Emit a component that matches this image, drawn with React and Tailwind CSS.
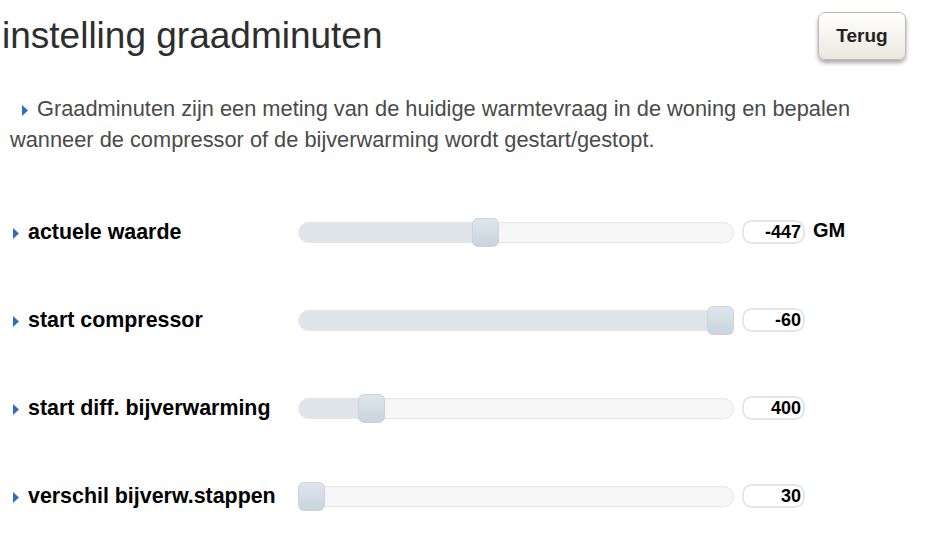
const rows = [
  { label: "actuele waarde", value: "-447", unit: "GM", pos: 174 },
  { label: "start compressor", value: "-60", pos: 409 },
  { label: "start diff. bijverwarming", value: "400", pos: 60 },
  { label: "verschil bijverw.stappen", value: "30", pos: 0 },
];

const Arrow = ({ className }) => (
  <svg width="6" height="11" viewBox="0 0 6 11" className={className}>
    <path d="M0 0 L6 5.5 L0 11 Z" fill="#2c6fc0" />
  </svg>
);

const Slider = ({ pos }) => {
  return (
    <div className="relative w-[436px] h-[21px] rounded-[11px] border border-[#e8e5dd] bg-[#f6f6f6]">
      <div
        className="absolute left-0 top-0 bottom-0 rounded-l-[11px] bg-[#dfe3ea]"
        style={{ width: pos + 13 }}
      />
      <div
        className="absolute top-[-5px] w-[27px] h-[29px] rounded-[6px] border border-[#ccd3da] bg-gradient-to-b from-[#dfe5ec] to-[#c9d4dd]"
        style={{ left: pos - 1 }}
      />
    </div>
  );
};

const Row = ({ label, value, unit, pos }) => {
  return (
    <div className="flex flex-row items-center h-[88px]">
      <div className="flex flex-row items-center w-[298px] pl-[13px]">
        <Arrow className="mr-[9px] mt-[4px]" />
        <span className="text-[21.4px] font-bold text-black">{label}</span>
      </div>
      <Slider pos={pos} />
      <div className="ml-[8px] w-[63px] h-[24px] rounded-[10px] border-2 border-[#e6e6e6] bg-white flex items-center justify-end pr-[2px] text-[18px] font-bold text-black">
        {value}
      </div>
      {unit && (
        <span className="ml-[8px] text-[20px] font-bold text-black -mt-[4px]">{unit}</span>
      )}
    </div>
  );
};

export default function App() {
  return (
    <div className="w-[928px] h-[533px] bg-white overflow-hidden font-['Liberation_Sans',Arial,sans-serif]">
      <div className="flex flex-row justify-between items-start">
        <h1 className="ml-[2px] mt-[13px] text-[37px] leading-[46px] text-[#2e2e2e] font-normal">
          instelling graadminuten
        </h1>
        <button className="mt-[12px] mr-[22px] w-[88px] h-[48px] rounded-[7px] border border-[#bdbab2] bg-gradient-to-b from-[#ffffff] to-[#ebe8de] shadow-[0_3px_4px_rgba(0,0,0,0.35)] text-[19px] font-bold text-[#222]">
          Terug
        </button>
      </div>
      <p className="mt-[33px] pl-[10px] pr-[60px] text-[21.8px] leading-[31px] text-[#4a4a4a]">
        <span className="inline-block w-[27px] pl-[12px]">
          <Arrow />
        </span>
        Graadminuten zijn een meting van de huidige warmtevraag in de woning en bepalen wanneer
        de compressor of de bijverwarming wordt gestart/gestopt.
      </p>
      <div className="mt-[33px] flex flex-col">
        {rows.map((r) => (
          <Row key={r.label} {...r} />
        ))}
      </div>
    </div>
  );
}
